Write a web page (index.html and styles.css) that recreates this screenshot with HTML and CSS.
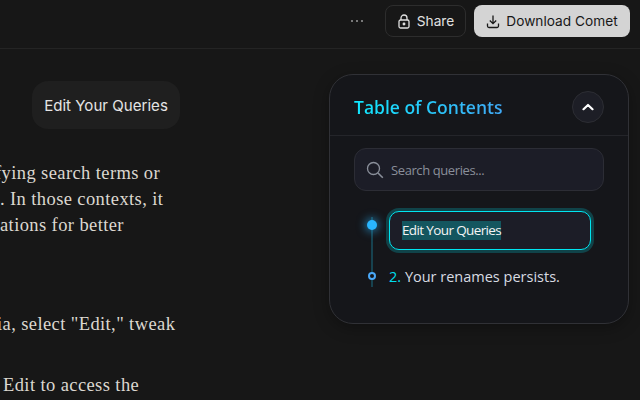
FILE: index.html
```html
<!DOCTYPE html>
<html lang="en">
<head>
<meta charset="utf-8">
<title>Edit Your Queries</title>
<link rel="stylesheet" href="styles.css">
</head>
<body>
<header class="topbar">
  <button class="more" aria-label="More"><svg width="14" height="4" viewBox="0 0 14 4"><circle cx="2" cy="2" r="1" /><circle cx="7" cy="2" r="1" /><circle cx="12" cy="2" r="1" /></svg></button>
  <button class="btn share"><svg width="14" height="15" viewBox="0 0 14 15" fill="none" stroke="currentColor" stroke-width="1.3"><rect x="2" y="6" width="10" height="8" rx="1.5"/><path d="M4 6V4a3 3 0 0 1 6 0v2"/><circle cx="7" cy="10" r=".8" fill="currentColor"/></svg>Share</button>
  <button class="btn download"><svg width="14" height="15" viewBox="0 0 14 15" fill="none" stroke="currentColor" stroke-width="1.3"><path d="M7 1.5v8M3.8 6.5 7 9.7l3.2-3.2M1.5 9.5v2.5a1.5 1.5 0 0 0 1.5 1.5h8a1.5 1.5 0 0 0 1.5-1.5V9.5"/></svg>Download Comet</button>
</header>
<main class="main">
  <article class="article">
    <div class="query-wrap"><div class="query">Edit Your Queries</div></div>
    <div class="para">
      <p class="line l1">fying search terms or</p>
      <p class="line l2">. In those contexts, it</p>
      <p class="line l3">ations for better</p>
    </div>
    <div class="para p2">
      <p class="line l4">ia, select "Edit," tweak</p>
    </div>
    <div class="para p3">
      <p class="line l5">Edit to access the</p>
    </div>
  </article>
  <aside class="toc">
    <div class="toc-head">
      <h2 class="toc-title">Table of Contents</h2>
      <button class="collapse" aria-label="Collapse"><svg width="12" height="8" viewBox="0 0 12 8" fill="none" stroke="currentColor" stroke-width="2.2" stroke-linecap="round" stroke-linejoin="round"><path d="M1.5 6.2 6 2l4.5 4.2"/></svg></button>
    </div>
    <div class="toc-body">
      <div class="search"><svg width="18" height="18" viewBox="0 0 18 18" fill="none" stroke="currentColor" stroke-width="1.3"><circle cx="7.5" cy="7.5" r="6"/><path d="m12 12 4.8 4.8" stroke-width="1.6"/></svg><span>Search queries...</span></div>
      <ol class="list">
        <li class="item active"><span class="dot big"></span><div class="edit"><span class="sel">Edit Your Queries</span></div></li>
        <li class="item"><span class="dot small"></span><div class="label"><span class="num">2.</span> Your renames persists.</div></li>
      </ol>
    </div>
  </aside>
</main>
</body>
</html>
```
FILE: styles.css
```css
* { box-sizing: border-box; }
html, body { margin: 0; height: 100%; }
body {
  width: 640px;
  height: 400px;
  overflow: hidden;
  background: #171717;
  display: flex;
  flex-direction: column;
  font-family: "Inter", "Liberation Sans", sans-serif;
}
button { font-family: inherit; cursor: pointer; }
.topbar {
  height: 49px;
  flex: none;
  display: flex;
  align-items: center;
  justify-content: flex-end;
  padding: 0 10px 6px 0;
  border-bottom: 1px solid #242424;
}
.more {
  background: none;
  border: 0;
  padding: 0;
  margin-right: 21px;
  display: flex;
}
.more svg { fill: #9a9a9a; }
.btn {
  height: 32px;
  border-radius: 8px;
  display: flex;
  align-items: center;
  gap: 6px;
  font-size: 13.7px;
  padding: 0;
}
.share {
  width: 81px;
  justify-content: center;
  background: transparent;
  border: 1px solid #2d2d2d;
  color: #e0e0e0;
  margin-right: 8px;
}
.download {
  width: 156px;
  justify-content: center;
  background: #d4d4d4;
  border: 0;
  color: #181818;
}
.main {
  flex: 1;
  display: flex;
  justify-content: space-between;
  padding: 32px 11px 0 0;
  min-height: 0;
}
.article {
  width: 180px;
  flex: none;
  overflow: hidden;
  color: #dcd8d0;
}
.query-wrap { display: flex; justify-content: flex-end; }
.query {
  width: 148px;
  height: 48px;
  border-radius: 16px;
  background: #1f1f1f;
  color: #e4e4e4;
  font-size: 15.1px;
  display: flex;
  align-items: center;
  justify-content: center;
}
.para { margin-top: 31px; }
.p2 { margin-top: 73px; }
.p3 { margin-top: 35px; }
.line {
  margin: 0;
  height: 26px;
  line-height: 26px;
  white-space: nowrap;
  font-family: "Liberation Serif", serif;
  font-size: 18.5px;
  letter-spacing: .4px;
}
.l1 { margin-left: -5px; }
.l2 { margin-left: 0; }
.l3 { margin-left: 0; }
.l4 { margin-left: -3px; }
.l5 { margin-left: 3px; }
.toc {
  width: 300px;
  height: 250px;
  flex: none;
  margin-top: -7px;
  background: #15161a;
  border: 1px solid #303136;
  border-radius: 24px;
  box-shadow: 0 4px 16px rgba(0,0,0,.3);
  font-family: "Open Sans", "Noto Sans", sans-serif;
}
.toc-head {
  height: 61px;
  display: flex;
  align-items: center;
  justify-content: space-between;
  padding: 3px 24px 0;
  border-bottom: 1px solid #24252a;
}
.toc-title {
  margin: 0;
  font-size: 17.5px;
  font-weight: 600;
  background: linear-gradient(90deg, #10e8ff, #3fa9f5);
  -webkit-background-clip: text;
  background-clip: text;
  color: transparent;
}
.collapse {
  width: 32px;
  height: 32px;
  border-radius: 50%;
  border: 1px solid #2c2d33;
  background: #1d1e26;
  color: #fff;
  display: flex;
  align-items: center;
  justify-content: center;
  padding: 0;
}
.toc-body { padding: 12px 24px 0; }
.search {
  height: 43px;
  border: 1px solid #2c2d35;
  border-radius: 12px;
  background: #1c1d27;
  display: flex;
  align-items: center;
  gap: 7px;
  padding-left: 11px;
  color: #8a8f9a;
  font-size: 13px;
  letter-spacing: -.4px;
}
.list {
  list-style: none;
  margin: 19px 0 0;
  padding: 0;
  position: relative;
}
.list::before {
  content: "";
  position: absolute;
  left: 17px;
  top: 7px;
  bottom: 4px;
  width: 2px;
  background: #17424f;
}
.item {
  display: flex;
  align-items: center;
  position: relative;
}
.active { height: 40px; }
.item + .item { margin-top: 11px; height: 30px; }
.dot {
  width: 36px;
  flex: none;
  display: flex;
  justify-content: center;
  position: relative;
}
.dot::after { content: ""; display: block; border-radius: 50%; box-sizing: border-box; }
.big { margin-bottom: 10px; }
.big::after {
  width: 10px;
  height: 10px;
  background: #29b6ff;
  box-shadow: 0 0 8px 2px rgba(41,182,255,.55);
}
.small::after {
  width: 8px;
  height: 8px;
  background: #15161a;
  border: 2px solid #4aa8f8;
}
.edit {
  width: 202px;
  height: 39px;
  margin-left: -1px;
  border: 1px solid #00e5f0;
  border-radius: 10px;
  background: #1c1d27;
  box-shadow: 0 0 0 3px rgba(0,229,240,.22);
  display: flex;
  align-items: center;
  padding-left: 12px;
  color: #f4f4f4;
  font-size: 13.5px;
  letter-spacing: -.63px;
}
.sel { background: #14565f; line-height: 19px; }
.label {
  font-size: 14.5px;
  color: #d8dbe2;
  margin-left: -1px;
}
.num { color: #00dcec; }
```
